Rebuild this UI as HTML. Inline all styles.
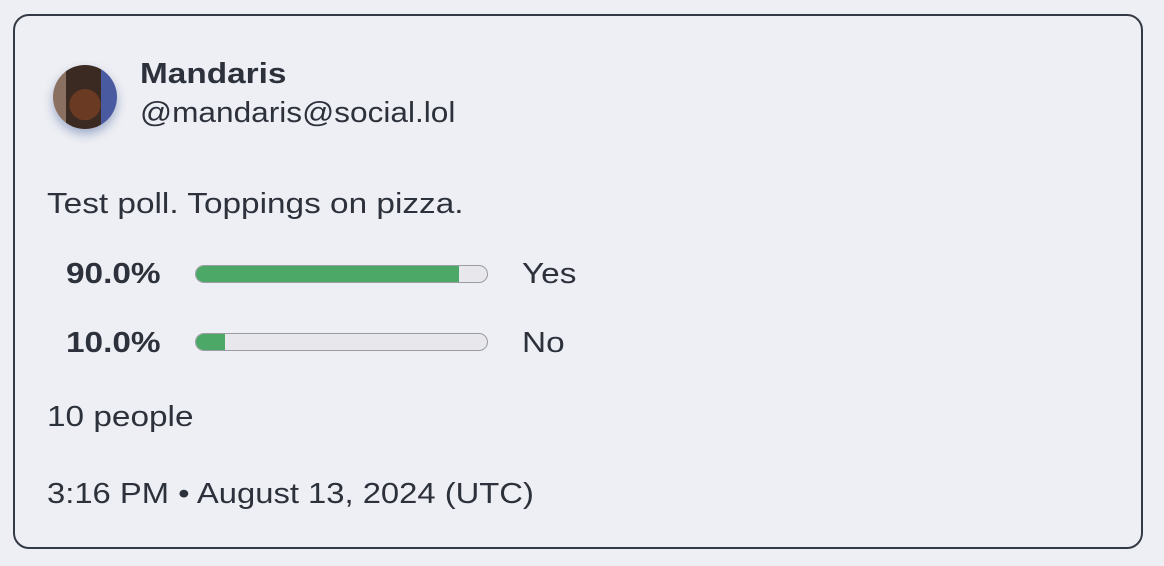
<!DOCTYPE html>
<html><head><style>
body{margin:0;width:1164px;height:566px;background:#eeeff4;font-family:"Liberation Sans",Arial,sans-serif;color:#2c313b;position:relative;overflow:hidden}
.card{position:absolute;left:13px;top:14px;width:1126px;height:531px;border:2px solid #343a45;border-radius:16px;background:#eeeff4}
.t{position:absolute;white-space:nowrap;font-size:29px;line-height:1;transform-origin:0 0;transform:scaleX(1.15)}
.av{position:absolute;left:53px;top:65px;width:64px;height:64px;border-radius:50%;background:radial-gradient(circle at 50% 62%,#6b3a22 0 30%,transparent 31%),linear-gradient(90deg,#8a7060 0 20%,#3b2a22 20% 75%,#4a5aa0 75%);box-shadow:0 5px 10px rgba(60,90,150,.45)}
.bar{position:absolute;left:195px;width:291px;height:16px;border:1px solid #9a9ca3;border-radius:9px;background:#e8e7ec;overflow:hidden}
.bar i{display:block;height:100%;background:#4ca866}
</style></head><body>
<div class="card"></div>
<div class="av"></div>
<div class="t" style="left:140px;top:60px;font-weight:bold">Mandaris</div>
<div class="t" style="left:140px;top:99px;transform:scaleX(1.09)">@mandaris@social.lol</div>
<div class="t" style="left:47px;top:190px">Test poll. Toppings on pizza.</div>
<div class="t" style="left:66px;top:260px;font-weight:bold">90.0%</div>
<div class="bar" style="top:265px"><i style="width:263px"></i></div>
<div class="t" style="left:522px;top:260px">Yes</div>
<div class="t" style="left:66px;top:329px;font-weight:bold">10.0%</div>
<div class="bar" style="top:333px"><i style="width:29px"></i></div>
<div class="t" style="left:522px;top:329px">No</div>
<div class="t" style="left:47px;top:403px">10 people</div>
<div class="t" style="left:47px;top:480px;transform:scaleX(1.13)">3:16 PM • August 13, 2024 (UTC)</div>
</body></html>
